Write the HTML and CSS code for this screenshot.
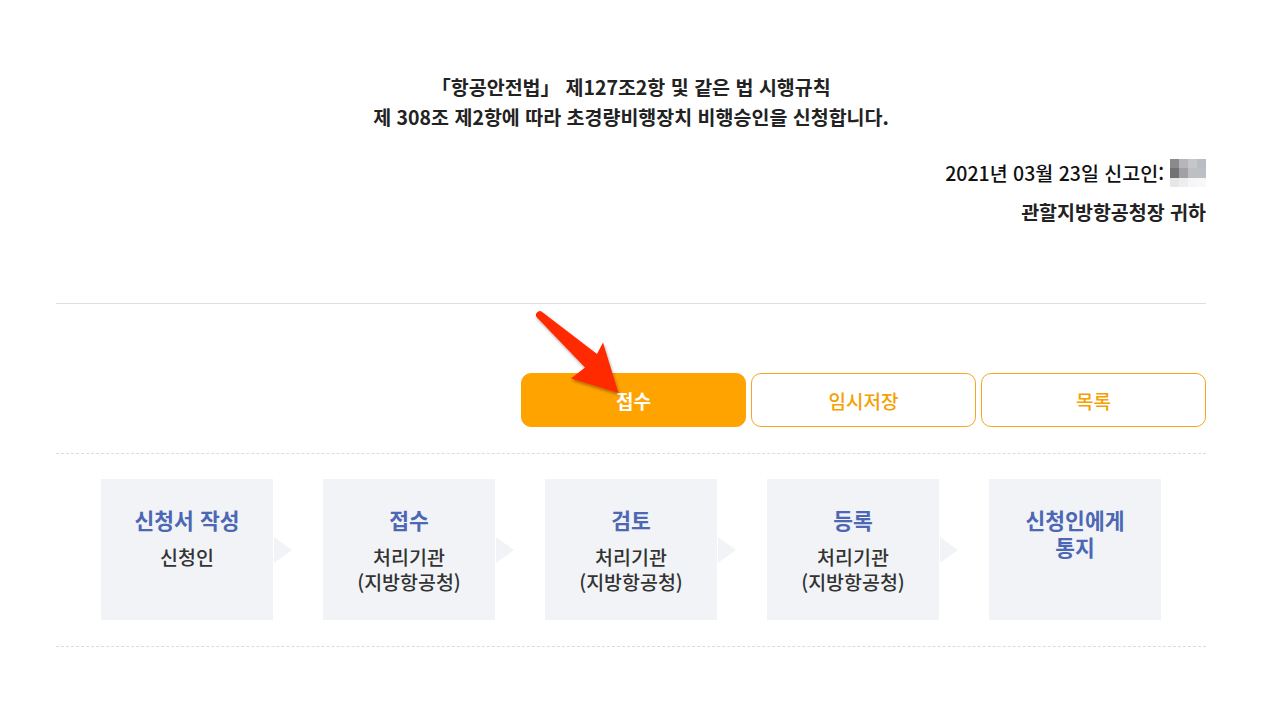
FILE: index.html
```html
<!DOCTYPE html>
<html lang="ko">
<head>
<meta charset="utf-8">
<link rel="stylesheet" href="styles.css">
</head>
<body>
<div class="page">
  <section class="statement">
    <p class="title">「항공안전법」 제127조2항 및 같은 법 시행규칙<br>제 308조 제2항에 따라 초경량비행장치 비행승인을 신청합니다.</p>
    <p class="date">2021년 03월 23일 신고인: <span class="blur"><i style="background:#8a8a8a"></i><i style="background:#b6b6ba"></i><i style="background:#c6c7ca"></i><i style="background:#b9bdc3"></i><i style="background:#727272"></i><i style="background:#a1a1a5"></i><i style="background:#bebfc1"></i><i style="background:#bac0c5"></i><i style="background:#e7e7e8"></i><i style="background:#eeeef1"></i><i style="background:#f6f6f7"></i><i style="background:#f7f8f9"></i></span></p>
    <p class="to">관할지방항공청장 귀하</p>
  </section>
  <div class="actions">
    <button class="btn primary">접수</button>
    <button class="btn outline">임시저장</button>
    <button class="btn outline">목록</button>
  </div>
  <div class="steps">
    <div class="step"><div class="st">신청서 작성</div><div class="sub">신청인</div></div>
    <div class="chev"></div>
    <div class="step"><div class="st">접수</div><div class="sub">처리기관<br>(지방항공청)</div></div>
    <div class="chev"></div>
    <div class="step"><div class="st">검토</div><div class="sub">처리기관<br>(지방항공청)</div></div>
    <div class="chev"></div>
    <div class="step"><div class="st">등록</div><div class="sub">처리기관<br>(지방항공청)</div></div>
    <div class="chev"></div>
    <div class="step"><div class="st">신청인에게<br>통지</div></div>
  </div>
</div>
<svg class="arrow" width="1270" height="714" viewBox="0 0 1270 714">
  <defs>
    <filter id="sh" x="-20%" y="-20%" width="140%" height="140%">
      <feDropShadow dx="1" dy="2" stdDeviation="1.5" flood-color="#000" flood-opacity="0.35"/>
    </filter>
  </defs>
  <path filter="url(#sh)" fill="#ff2a00" d="M537 312.5 Q539 310 541.5 311.5 L597 354 L603 342.5 L618.5 393 L571 378.5 L585 367.5 L536.5 317 Q535 314.5 537 312.5 Z"/>
</svg>
</body>
</html>
```

FILE: styles.css
```css
* { box-sizing: border-box; }
html, body { margin: 0; padding: 0; background: #fff; }
body {
  font-family: "Noto Sans CJK KR", "Noto Sans", sans-serif;
  color: #222;
  width: 1270px;
  height: 714px;
  overflow: hidden;
  position: relative;
}
.page {
  margin-left: 56px;
  width: 1150px;
}
.statement {
  padding-top: 72px;
  border-bottom: 1px solid #dedede;
  padding-bottom: 76px;
}
.statement p { margin: 0; }
.title {
  text-align: center;
  font-size: 19.5px;
  font-weight: 700;
  line-height: 30px;
  color: #222;
}
.date {
  margin-top: 26px !important;
  text-align: right;
  font-size: 19.5px;
  font-weight: 500;
  line-height: 30px;
  color: #111;
  display: flex;
  justify-content: flex-end;
  align-items: center;
  gap: 6px;
}
.blur {
  display: grid;
  grid-template-columns: repeat(4, 9px);
  grid-template-rows: repeat(3, 9.5px);
  width: 36px;
}
.blur i { display: block; }
.to {
  margin-top: 9px !important;
  text-align: right;
  font-size: 19.5px;
  font-weight: 700;
  line-height: 30px;
  color: #222;
}
.actions {
  display: flex;
  justify-content: flex-end;
  gap: 5px;
  padding-top: 69px;
  padding-bottom: 26px;
  border-bottom: 1px dashed #dcdcdc;
}
.btn {
  width: 225px;
  height: 54px;
  border-radius: 10px;
  font-family: "Noto Sans CJK KR", "Noto Sans", sans-serif;
  font-size: 19px;
  cursor: pointer;
  padding: 0;
}
.btn.primary {
  background: #ffa300;
  border: 1px solid #ffa300;
  color: #fff;
  font-weight: 700;
}
.btn.outline {
  background: #fff;
  border: 1px solid #f7a41e;
  color: #f5a000;
  font-weight: 500;
}
.steps {
  display: flex;
  justify-content: center;
  align-items: center;
  padding: 25px 0 26px;
  border-bottom: 1px dashed #dcdcdc;
}
.step {
  width: 172px;
  height: 141px;
  background: #f2f3f7;
  text-align: center;
  padding-top: 27px;
}
.st {
  font-size: 21.5px;
  font-weight: 700;
  line-height: 27px;
  color: #4c68b4;
}
.sub {
  margin-top: 11px;
  font-size: 19.5px;
  font-weight: 500;
  line-height: 25px;
  color: #333;
}
.chev {
  width: 50px;
  height: 26px;
  position: relative;
}
.chev::before {
  content: "";
  position: absolute;
  left: 1px;
  top: 0;
  border-left: 18px solid #f2f3f7;
  border-top: 13px solid transparent;
  border-bottom: 13px solid transparent;
}
.arrow {
  position: absolute;
  left: 0;
  top: 0;
  pointer-events: none;
}
```
